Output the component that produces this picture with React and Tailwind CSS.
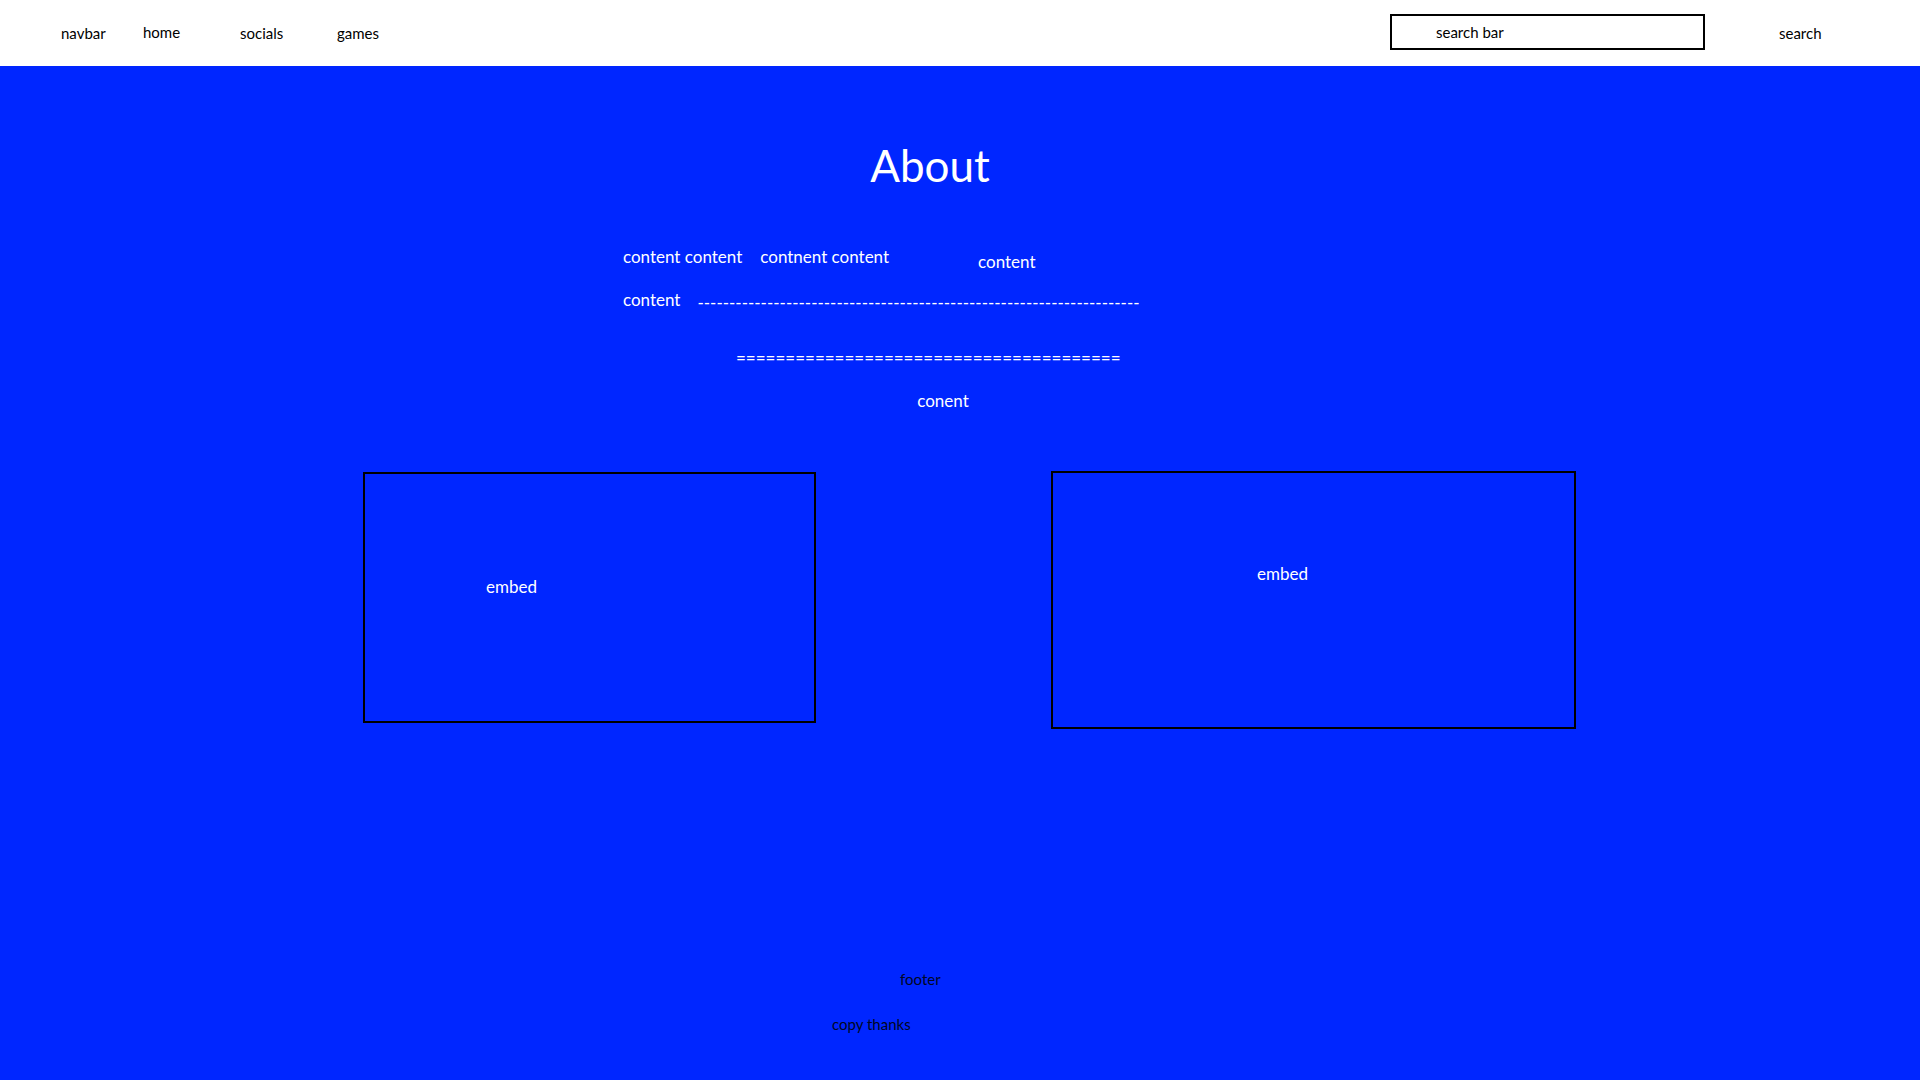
const font = { fontFamily: "Lato, 'Open Sans', sans-serif" };

const dashes = "-".repeat(70);
const equals = "=".repeat(39);

function Embed({ className, textClass }) {
  return (
    <div className={`border-2 border-black ${className}`}>
      <p className={`text-[17px] leading-none text-white ${textClass}`}>embed</p>
    </div>
  );
}

export default function App() {
  return (
    <div className="flex min-h-screen flex-col bg-[#0026ff]" style={font}>
      <header className="flex h-[66px] items-center bg-white pl-[61px] text-[15px] leading-none text-black">
        <div className="flex flex-1 items-center">
          <span className="w-[82px]">navbar</span>
          <span className="w-[97px] -mt-[2px]">home</span>
          <span className="w-[97px]">socials</span>
          <span>games</span>
        </div>
        <div className="mb-[2px] flex h-[36px] w-[315px] items-center border-2 border-black pl-[44px]">search bar</div>
        <div className="w-[215px] pl-[74px]">search</div>
      </header>

      <main className="flex flex-1 flex-col text-white">
        <h1 className="mt-[77px] pr-[60px] text-center text-[44px] leading-none">About</h1>

        <div className="ml-[623px] mt-[61px] flex items-start text-[17px] leading-none">
          <span>content content</span>
          <span className="ml-[18px]">contnent content</span>
          <span className="ml-[89px] mt-[5px]">content</span>
        </div>

        <div className="ml-[623px] mt-[21px] flex items-start text-[17px] leading-none">
          <span>content</span>
          <span className="ml-[17px] mt-[3px] whitespace-nowrap">{dashes}</span>
        </div>

        <div className="ml-[736px] mt-[38px] whitespace-nowrap text-[17px] leading-none">{equals}</div>

        <p className="mt-[26px] pr-[34px] text-center text-[17px] leading-none">conent</p>

        <div className="mt-[62px] flex items-start">
          <Embed className="ml-[363px] mt-[1px] h-[251px] w-[453px] pl-[121px] pt-[104px]" />
          <Embed className="ml-[235px] h-[258px] w-[525px] pl-[204px] pt-[92px]" />
        </div>

        <footer className="flex flex-col pb-[46px] text-[15px] leading-none text-[#020624]">
          <p className="ml-[900px] mt-[243px]">footer</p>
          <p className="ml-[832px] mt-[30px]">copy thanks</p>
        </footer>
      </main>
    </div>
  );
}
